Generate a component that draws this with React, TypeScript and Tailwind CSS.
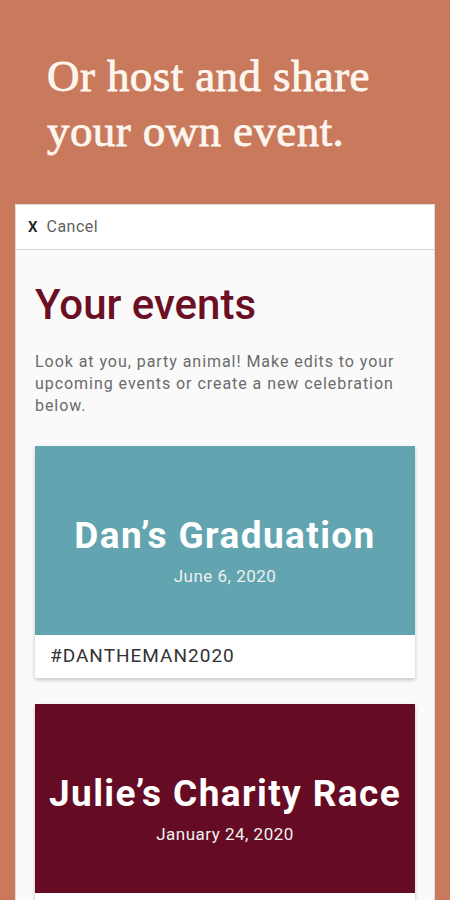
import React from 'react';

const events = [
  { title: 'Dan’s Graduation', date: 'June 6, 2020', tag: '#DANTHEMAN2020', bg: 'bg-[#62a5b0]' },
  { title: 'Julie’s Charity Race', date: 'January 24, 2020', tag: '', bg: 'bg-[#650c24]' },
];

export default function App() {
  return (
    <div className="w-[450px] h-[900px] overflow-hidden bg-[#c97a5c] font-['Roboto',sans-serif]">
      <h1 className="pt-[49px] pl-[47px] text-[45px] leading-[55px] tracking-[0.4px] text-[#fdf6ef] font-['Liberation_Serif',serif] [-webkit-text-stroke:0.8px_#fdf6ef]">
        Or host and share
        <br />
        your own event.
      </h1>

      <div className="mt-[45px] mx-[15px] bg-[#fafafa] border-l border-r border-t border-[#dcdcdc] h-[700px]">
        {/* Cancel bar */}
        <div className="h-[45px] bg-white border-b border-[#d6d6d6] flex items-center pl-[12px] gap-[9px]">
          <span className="text-[15px] font-semibold text-[#222]">X</span>
          <span className="text-[16px] tracking-[0.5px] text-[#5f5f5f]">Cancel</span>
        </div>

        <div className="px-[19px]">
          <h2 className="mt-[30px] text-[42px] leading-[50px] font-medium text-[#6b0f24]">Your events</h2>
          <p className="mt-[21px] text-[16px] leading-[22px] tracking-[0.95px] text-[#6b6b6b] pr-[8px]">
            Look at you, party animal! Make edits to your upcoming events or create a new celebration below.
          </p>

          <div className="mt-[29px] flex flex-col gap-[26px]">
            {events.map((e) => (
              <div key={e.title} className="bg-white shadow-[0_2px_4px_rgba(0,0,0,0.22)]">
                <div className={`${e.bg} h-[189px] pt-[68px] flex flex-col items-center`}>
                  <div className="text-[37px] leading-[44px] font-bold tracking-[1.4px] text-white whitespace-nowrap">{e.title}</div>
                  <div className="mt-[8px] text-[17px] leading-[20px] tracking-[0.5px] text-[#f0f0f0]">{e.date}</div>
                </div>
                <div className="h-[43px] flex items-center pl-[15px] text-[19px] tracking-[1px] text-[#333]">{e.tag}</div>
              </div>
            ))}
          </div>
        </div>
      </div>
    </div>
  );
}
